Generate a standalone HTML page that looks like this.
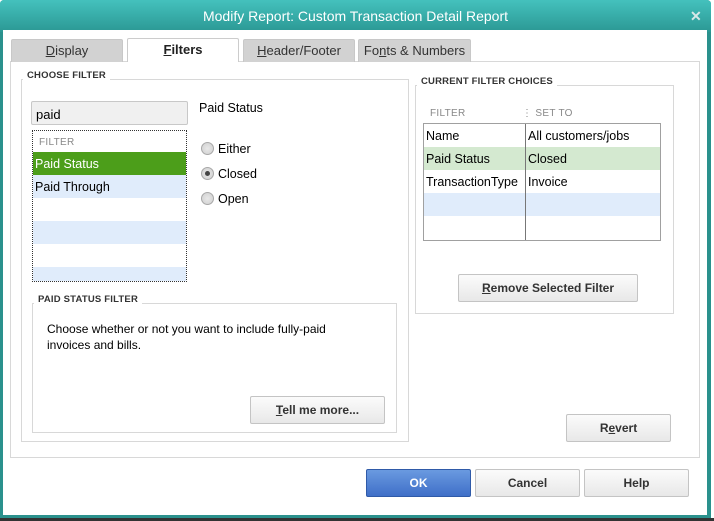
<!DOCTYPE html>
<html><head><style>
*{margin:0;padding:0;box-sizing:border-box}
body{width:714px;height:521px;overflow:hidden;background:#fff;font-family:"Liberation Sans",sans-serif;font-size:12px;color:#000;position:relative}
.a{position:absolute}
.win{left:0;top:0;width:711px;height:518px;background:#2a918d;border-radius:4px 4px 0 0}
.title{left:0;top:0;width:711px;height:32px;background:linear-gradient(#44c1bd,#2b9894);border-radius:4px 4px 0 0;color:#fff;font-size:14px;text-align:center;line-height:33px}
.client{left:3px;top:30px;width:704px;height:485px;background:#fff}
.tab{height:23px;background:#d2d2d2;border:1px solid #c8c8c8;border-bottom:none;text-align:center;line-height:22px;font-size:13px;color:#333;border-radius:2px 2px 0 0}
.tab.on{background:#fff;border-color:#ccc;height:24px;font-weight:bold;color:#222}
.grp{border:1px solid #d8d8d8}
.lbl{background:#fff;font-size:9.5px;font-weight:bold;color:#333;padding:0 4px;letter-spacing:.2px}
.btn{border:1px solid #c4c4c4;border-radius:2px;background:linear-gradient(#fbfbfb,#e8e8e8);text-align:center;font-weight:bold;color:#333;font-size:12px}
.radio{width:13px;height:13px;border-radius:50%;border:1px solid #a8a8a8;background:radial-gradient(#e8e8e8,#cfcfcf)}
.hdr{font-size:10px;color:#888;letter-spacing:.3px}
</style></head><body>
<div class="a win"></div>
<div class="a title">Modify Report: Custom Transaction Detail Report</div>
<div class="a" style="left:690px;top:8px;color:#d8e8e8;font-size:14px;font-weight:bold">✕</div>
<div class="a client"></div>
<div class="a" style="left:0;top:518px;width:714px;height:3px;background:#333"></div>

<div class="a grp" style="left:10px;top:61px;width:690px;height:397px"></div>
<div class="a tab" style="left:11px;top:39px;width:112px"><u>D</u>isplay</div>
<div class="a tab on" style="left:127px;top:38px;width:112px"><u>F</u>ilters</div>
<div class="a tab" style="left:243px;top:39px;width:112px"><u>H</u>eader/Footer</div>
<div class="a tab" style="left:358px;top:39px;width:113px">Fo<u>n</u>ts &amp; Numbers</div>

<div class="a grp" style="left:21px;top:79px;width:388px;height:363px"></div>
<div class="a lbl" style="left:23px;top:70px">CHOOSE FILTER</div>
<div class="a" style="left:31px;top:101px;width:157px;height:24px;background:#f0f0f0;border:1px solid #c8c8c8;border-radius:2px;font-size:13px;padding:5px 4px">paid</div>
<div class="a" style="left:32px;top:130px;width:155px;height:152px;border:1px dotted #333;overflow:hidden">
 <div class="hdr" style="height:21px;padding:6px 6px">FILTER</div>
 <div style="height:23px;background:#4c9e1a;color:#fff;padding:5px 2px;font-size:12.5px">Paid Status</div>
 <div style="height:23px;background:#e0ecfb;padding:5px 2px;font-size:12.5px">Paid Through</div>
 <div style="height:23px"></div><div style="height:23px;background:#e0ecfb"></div>
 <div style="height:23px"></div><div style="height:23px;background:#e0ecfb"></div>
</div>
<div class="a" style="left:199px;top:101px;font-size:12.5px">Paid Status</div>
<div class="a radio" style="left:201px;top:142px"></div><div class="a" style="left:218px;top:142px;font-size:12.5px">Either</div>
<div class="a radio" style="left:201px;top:167px"></div><div class="a" style="left:205px;top:171px;width:5px;height:5px;border-radius:50%;background:#444"></div><div class="a" style="left:218px;top:167px;font-size:12.5px">Closed</div>
<div class="a radio" style="left:201px;top:192px"></div><div class="a" style="left:218px;top:192px;font-size:12.5px">Open</div>

<div class="a grp" style="left:32px;top:303px;width:365px;height:130px"></div>
<div class="a lbl" style="left:34px;top:294px">PAID STATUS FILTER</div>
<div class="a" style="left:47px;top:321px;font-size:12px;line-height:16px">Choose whether or not you want to include fully-paid<br>invoices and bills.</div>
<div class="a btn" style="left:250px;top:396px;width:135px;height:28px;line-height:26px"><u>T</u>ell me more...</div>

<div class="a grp" style="left:415px;top:85px;width:259px;height:229px"></div>
<div class="a lbl" style="left:417px;top:76px">CURRENT FILTER CHOICES</div>
<div class="a hdr" style="left:430px;top:108px">FILTER</div>
<div class="a hdr" style="left:522px;top:108px">⋮ SET TO</div>
<div class="a" style="left:423px;top:123px;width:238px;height:118px;border:1px solid #a0a0a0;overflow:hidden;font-size:12.5px">
 <div style="height:23px;padding:5px 2px">Name</div>
 <div style="height:23px;padding:5px 2px;background:#d4e9d0">Paid Status</div>
 <div style="height:23px;padding:5px 2px">TransactionType</div>
 <div style="height:23px;background:#e0ecfb"></div>
 <div class="a" style="left:101px;top:0;width:1px;height:118px;background:#777"></div>
 <div class="a" style="left:104px;top:5px">All customers/jobs</div>
 <div class="a" style="left:104px;top:28px">Closed</div>
 <div class="a" style="left:104px;top:51px">Invoice</div>
</div>
<div class="a btn" style="left:458px;top:274px;width:180px;height:28px;line-height:26px"><u>R</u>emove Selected Filter</div>
<div class="a btn" style="left:566px;top:414px;width:105px;height:28px;line-height:26px">R<u>e</u>vert</div>

<div class="a btn" style="left:366px;top:469px;width:105px;height:28px;line-height:26px;background:linear-gradient(#6a9ae0,#3f6fc8);border-color:#2f5aa8;color:#fff">OK</div>
<div class="a btn" style="left:475px;top:469px;width:105px;height:28px;line-height:26px">Cancel</div>
<div class="a btn" style="left:584px;top:469px;width:105px;height:28px;line-height:26px">Help</div>
</body></html>
